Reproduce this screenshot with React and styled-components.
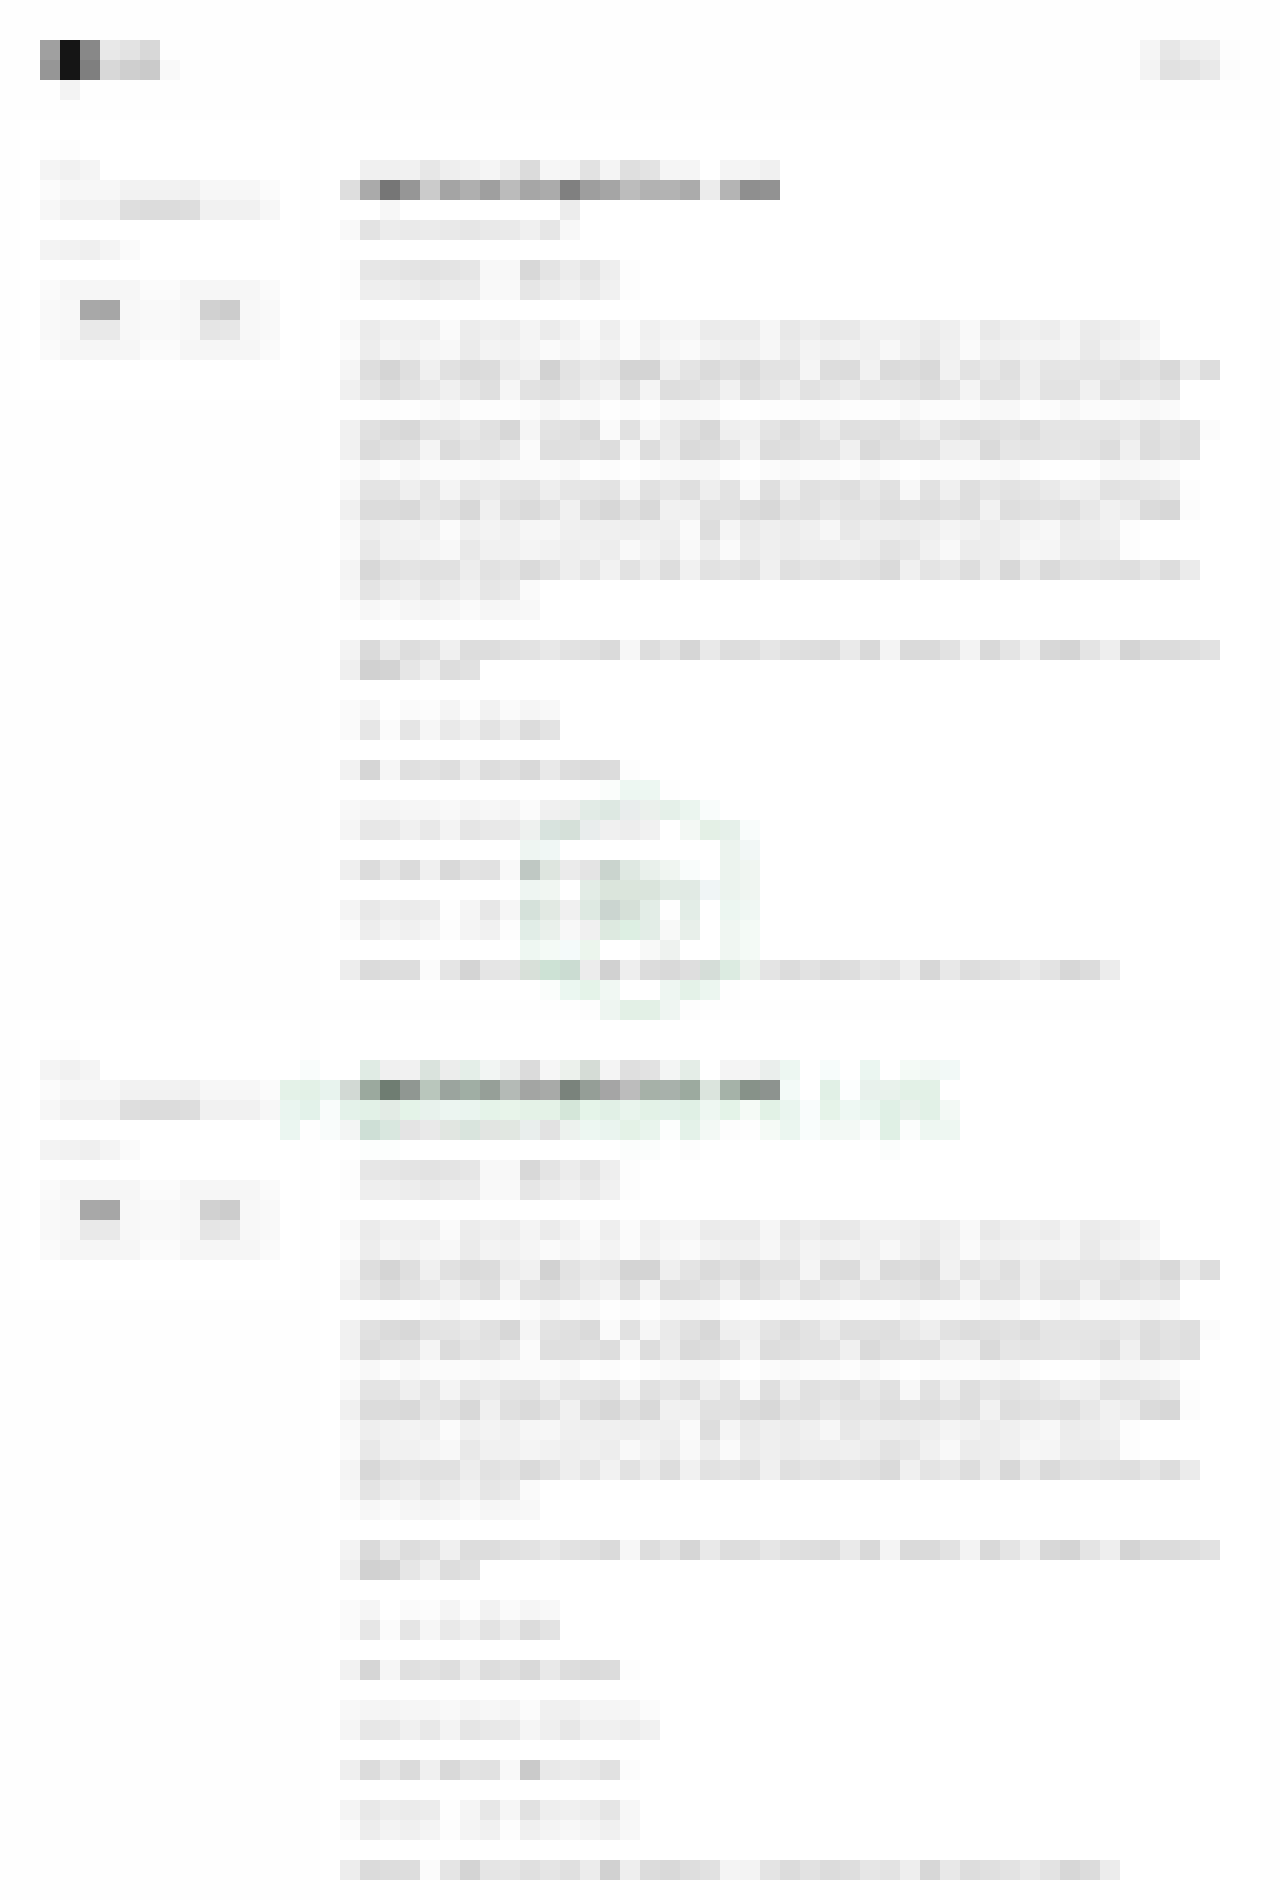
import styled, { createGlobalStyle } from "styled-components";

const GlobalStyle = createGlobalStyle`
  * {
    box-sizing: border-box;
  }
  body {
    margin: 0;
    background: #fefefe;
    font-family: "Liberation Sans", Arial, sans-serif;
  }
`

const Page = styled.div`
  display: flex;
  flex-direction: column;
  gap: 20px;
  padding: 20px 20px 0;
`

const Header = styled.header`
  display: flex;
  justify-content: space-between;
  align-items: flex-start;
  padding: 20px 20px 0;
  min-height: 80px;
`

const HeaderLink = styled.a`
  display: block;
  text-decoration: none;
`

const Section = styled.section`
  display: grid;
  grid-template-columns: 280px minmax(0, 1fr);
  gap: 20px;
  align-items: start;
`

const SideCard = styled.aside`
  display: flex;
  flex-direction: column;
  gap: 20px;
  padding: 20px 20px 40px;
  background: #fff;
`

const MainCard = styled.article`
  display: flex;
  flex-direction: column;
  gap: 20px;
  padding: 40px 20px 20px;
  background: #fff;
  overflow: hidden;
`

const Heading = styled.h2`
  margin: 0;
`

const Text = styled.p`
  margin: 0;
`

const Field = styled.div`
  display: flex;
  flex-direction: column;
`

const PlainButton = styled.button`
  display: block;
  padding: 0;
  border: 0;
  background: none;
  cursor: pointer;
`

const ButtonRow = styled.div`
  display: flex;
`

const Grid = styled.span`
  display: flex;
  flex-direction: column;
`

const GridRow = styled.span`
  display: flex;
  height: 20px;
`

const Cell = styled.span.attrs(({ $tone }) => ({ style: { background: $tone } }))`
  flex: 0 0 20px;
  height: 20px;
`

const Watermark = styled.div`
  position: fixed;
  inset: 0;
  display: flex;
  flex-direction: column;
  align-items: center;
  justify-content: center;
  gap: 40px;
  padding-top: 40px;
  pointer-events: none;
`

// "e4" is a grey, "e4f2e8" a full colour, "ff" an empty cell
const solid = (code) => {
  if (code === "ff") return "transparent"
  return code.length === 2 ? `#${code}${code}${code}` : `#${code}`
}

// turns a pale colour into the see-through ink that gives it on white
const ink = (code) => {
  if (code === "ff") return "transparent"
  const full = code.length === 2 ? code + code + code : code
  const drop = [0, 2, 4].map((i) => 255 - parseInt(full.slice(i, i + 2), 16))
  const alpha = Math.max(...drop, 1) / 177
  const [r, g, b] = drop.map((d) => Math.round(255 - d / alpha))
  return `rgba(${r}, ${g}, ${b}, ${alpha.toFixed(3)})`
}

const Mosaic = ({ rows, paint = solid }) => (
  <Grid>
    {rows.map((row, y) => (
      <GridRow key={y}>
        {row.split(" ").map((code, x) => (
          <Cell key={x} $tone={paint(code)} />
        ))}
      </GridRow>
    ))}
  </Grid>
)

const logo = [
  "a0 15 88 e8 e3 d8 fe",
  "96 15 7f d8 cf ca f9",
  "ff f3 fe",
]

const account = [
  "f5 e7 ee ef fd",
  "f3 e1 e3 e9 fc",
]

const fieldLabel = [
  "fe fd ff",
  "f4 f1 f4",
]

const fieldButton = [
  "fb f7 f7 f7 f2 f2 f2 f0 f7 f7 f7 fb",
  "f7 f1 f1 f1 de dc dc dd f1 f1 f1 f7",
]

const groupLabel = ["f3 f2 ef f4 fa"]

const firstChoice = [
  "fa f6 f6 f6 f6 fb",
  "f9 f8 a8 a6 f8 f9",
  "f9 f8 e9 e9 f8 f9",
  "fa f6 f6 f6 f6 fb",
]

const secondChoice = [
  "fb f6 f6 f6 f6 fa",
  "f9 f8 d1 cc f8 f9",
  "f9 f8 e5 e7 f8 f9",
  "fb f6 f6 f6 f6 fa",
]

const title = [
  "ff f0 f0 f1 e7 ee f1 f5 ed db f6 f5 e2 f4 df e3 f5 f5 ff f4 f4 f0",
  "de aa 76 96 cb a4 af 9f bb a6 ab 80 9e a5 bc b2 b3 ab ec b4 8f 92",
  "ff ff f7 ff ff ff ff ff ff ff ff ec",
]

const subtitle = ["f9 e3 ec ea eb e9 e6 e9 ea f0 e6 f8"]

const paragraphs = [
  [
    "fd e7 e6 e4 e3 e4 e6 f8 f8 d8 e4 ec e4 ee fd",
    "fd ee ef ed ea ed ec f9 f9 e6 ec f0 ea f1 fd",
  ],
  [
    "f8 eb f0 f0 ee fa ec ef ed f4 eb f2 fa ee fb f0 f4 f5 eb ec eb f6 e8 ed e8 e9 f1 f0 ef eb ef f9 e9 ee f0 ed f4 eb ed f0 f5",
    "fb ed f5 f2 f6 f8 eb f3 f2 f5 fa f6 f9 f3 fb f2 f7 fa f3 f0 f1 f7 eb f3 f1 f3 f0 f8 f0 ea f1 fa f0 f2 f4 f4 f6 ea f2 f3 f8",
    "f5 de d5 df f0 e1 db dc ec f1 d2 e3 e9 e7 d4 d4 ef e4 db e1 da e3 e3 f5 dd dc f2 db dd d9 f2 e3 e9 e0 ee e5 e6 e5 e5 df e2 d9 ec dd",
    "f0 e6 de e4 e8 f0 e7 df f6 e2 e0 e5 ee f3 df f4 de e0 e4 f1 e0 e6 ee e2 e7 ec e5 e7 e5 df e4 f4 e3 e4 f0 e3 e3 f1 e1 e5 e9 e4",
    "ff fe fd fe fb f8 fd fd fd fb f6 fb f9 fe fb fe f9 f8 f9 fe ff fd fd fc fb fd fd fd f8 fc fc fc f9 f8 fe fc f7 fb fc fa f8 fa",
    "f1 e1 db d8 e3 e4 e8 e1 d7 f5 e3 e0 da fa e1 f6 ea e1 d8 ef f0 e4 dd e3 ec e0 e1 df e8 ee e2 dd e0 e2 dd e5 e5 e5 e4 e8 de e3 df fb",
    "f1 dc e1 e3 f4 dc e4 e3 e9 fb df e0 e2 dd f8 dd ec da dd e2 f3 dd e0 e3 e3 f0 da e1 e1 e0 ef f0 da e6 e4 e5 e7 e4 dd f0 dd e2 df",
    "fd f8 fd f8 fb fb fb f9 fa fa fb f8 fe fc ff fc f9 f8 f7 fd ff fb f9 fb fa fd f8 fc ff fc fb fc fa f8 fd ff fe fe f8 f7 f9 fa",
    "f8 e4 e4 ef e5 f4 e7 ea e4 e3 ee e6 e5 e3 f6 e1 e7 df ee e3 f9 df ef e1 e3 df e9 e1 f8 e2 f0 df e6 e3 e5 ea f0 ee e2 e4 e6 e8 fd",
    "f0 dc dc d9 e7 e3 d8 f0 e0 da e1 f1 dd d7 e2 d9 f1 f0 e1 e2 dc d8 e3 e1 e8 e4 e4 de e0 de e2 de f2 de e1 e3 df e8 f1 ec db d7 fc",
    "f9 ee f2 f3 f0 fb f0 f3 f0 f6 f7 f0 ef f0 ee f0 ef fa dd f5 ea ef ec f0 f7 e8 ee ee ec ee f4 f2 ed f0 f4 f8 ec ee f1 fd",
    "fa e8 f2 f1 f4 f8 e9 f1 f1 f4 f2 ee f1 ed f9 f2 ec f9 ed fa eb ef ec ee ee f0 ec e3 e7 f1 f9 ec ed f0 f7 f5 ed ec ed fd",
    "f4 d8 e1 e4 e1 e1 ed e2 e5 da e2 ee e4 f2 e2 ed dd f1 e2 e4 e0 f0 e0 e4 e1 e4 e1 da f0 e4 e8 dd ed d8 ea da e2 e4 e1 df e6 dd eb",
    "f6 e4 ec ef e7 ec f1 e6 e9 fa",
    "fd f7 fa f6 f4 f6 fa f6 f7 f8",
  ],
  [
    "f3 da ea dd e1 f0 dd dd e1 e3 e8 e2 e0 da f7 dd e5 d6 e9 dd de e6 e0 de dc ea d9 f4 da da e2 f3 d9 e4 f1 d8 d4 e4 ee d4 dc dc de e2",
    "ef d1 d3 e6 f0 dd e1",
  ],
  [
    "fa f5 ff fa fc f4 fd f2 fa f5 f8",
    "fa e6 fb e5 f6 e9 ef e3 ec dc e3",
  ],
  ["f2 d6 f6 e0 e3 de ed dd e1 d9 e9 dd da dc fd"],
  [
    "f8 f5 f4 f6 f6 f9 f4 f7 f4 fb f0 f0 f5 f5 f6 fb",
    "f5 e7 e8 f0 e8 f3 e5 e8 e9 f5 ef e7 f0 f0 ed f1",
  ],
  ["ef dc e8 db f0 d9 e3 e1 f9 ca e9 eb e8 e1 fc"],
  [
    "f4 e8 ed eb ec fe f5 e7 f6 e1 ee f0 ed e5 f7",
    "fb ed f3 f0 f4 fd f4 f1 fd f0 f4 f8 f4 f0 f8",
  ],
  ["ed db dd dd fb e5 d4 e5 e6 e0 e5 e0 ec d1 ee dc d9 de e1 f4 f3 e4 dc e2 dc de e6 e3 ee d7 e8 dd e0 e3 e9 e3 d7 dc ec"],
]

const badge = [
  "ff ff ff fe fafdfb edf7f2 edf7f2 fe ff ff ff ff",
  "ff ff fdfefd ebf4ef e6f1eb f2f6f6 eff4f0 e5f0e9 ebf5ef f9fcfb ff ff",
  "f8fbf9 e6f1ec ebf6ef f8fcfc ff ff ff ff f3f8f4 e4f0e6 e6f0ea f9fcfb",
  "eef5f2 f0f7f5 ff ff ff ff ff ff ff ff ecf3ee f2f7f6",
  "f0f9f4 f3faf4 ff fb e4eee8 e2ebe5 e9f0eb f0f5f1 f9fcfb ff ecf3ee f0f5f1",
  "eef5f2 f1f6f2 ff e3ece6 dbe5dc dbe5dc dae4dc e2ebe5 e1eae4 f0f5f6 ecf3ee f0f5f1",
  "f1fdf6 f2f9f3 ff effaf3 e1ebe6 dde7df e3ede7 fe e3ede7 ff ecf6f1 f0f7f3",
  "effbf5 f5fbf6 ff fb ebf7ee e3f5e9 e3ede7 f8f9f8 e8efea ff f0f6f2 f4faf6",
  "eef7f2 f4faf6 f4fafa ecf5ed ff ff f8f9f8 eef2ef ff ff f0f6f2 f4faf6",
  "f6fef7 e3f8eb e6f7ed ff ff ff ff ff ff f1f9f4 e6f5eb f8fef9",
  "ff fafdfb ebf7f1 e5f3e9 f1f8f3 ff ff eef6f2 e4f2e8 ecf6f0 fe ff",
  "ff ff ff fe eff6f2 e4f1e7 e4f1e7 f0f6f3 fe ff ff ff",
]

const wordmark = [
  "ff fafdfc ff ff eef9f2 ff ff f0f9f3 fdfefd f1fbf5 fcfffd fdfffe ff ff f6fbf6 f0f7f1 ff ff fe fdfffe edf6f0 ff ff ff f9fdfb edf7f2 ff f7fcfb ff ebf6f1 ff f4faf6 f2f8f4 f2f9f7 ff ff",
  "e4f2e8 e4f2e8 e8f3ee f1f8f3 e3f1e6 e3f1e6 f1f8f3 e6f3e9 edf6f0 e4f2e8 ecf5ee f4faf6 fafcfa fafcfa ecf5ee ecf5ee ff ff eaf5ec edf6f0 e3f1e6 ecf5ee e6f3e9 eaf5ec f4faf6 f3faf8 ff e1f0e6 fcfefe e8f1ec e9f2ec e3f1e7 e3f1e7 ff",
  "eaf5f0 e4f3eb f9fcfb e4f2ea e2f1e7 eaf2ec e4f3e8 e8f2ed ecf5f1 eaf4ef e5f3e9 e8f4ea e4f2e7 e4f2e7 e4f6e9 e5f4e9 e1f0e6 e9f4ed e3f2e7 e3f1e9 e0f0e5 eef7f2 e4f3e8 f5faf6 e2f2e6 eaf5ef f9fcfc e6f3e9 eef8f3 eaf5ef e0f0e6 e9f2ec e2f1e7 f3f9f5",
  "ebf6f1 ff f9fcfb f9fbfa e7f8ef eaf8f0 f9f9f9 fd f6fbf6 f0fbf4 f8fbf8 f5fbf5 f8fdfc fb f4f9f5 edf7f2 eaf4ef e4f2e7 e9f4ed fcfefd e4f2e9 f3f9f5 fd fe f5faf6 ebf6f0 f9fdfc f3f9f5 f3f9f5 fcfdfd e0f0e5 fbfdfc eef7f2 eef7f2",
  "ff ff ff ff fcfefd fcfefd ff ff ff ff ff ff ff ff ff ff ff fbfdfc fbfdfc ff fd ff ff ff ff ff ff ff ff ff fbfdfc",
]

const Post = () => (
  <Section>
    <SideCard>
      <Field>
        <Mosaic rows={fieldLabel} />
        <PlainButton type="button">
          <Mosaic rows={fieldButton} />
        </PlainButton>
      </Field>
      <Mosaic rows={groupLabel} />
      <ButtonRow>
        <PlainButton type="button">
          <Mosaic rows={firstChoice} />
        </PlainButton>
        <PlainButton type="button">
          <Mosaic rows={secondChoice} />
        </PlainButton>
      </ButtonRow>
    </SideCard>
    <MainCard>
      <div>
        <Heading>
          <Mosaic rows={title} />
        </Heading>
        <Text>
          <Mosaic rows={subtitle} />
        </Text>
      </div>
      {paragraphs.map((rows, i) => (
        <Text key={i}>
          <Mosaic rows={rows} />
        </Text>
      ))}
    </MainCard>
  </Section>
)

const App = () => {
  return (
    <>
      <GlobalStyle />
      <Page>
        <Header>
          <HeaderLink href="#home">
            <Mosaic rows={logo} />
          </HeaderLink>
          <HeaderLink href="#account">
            <Mosaic rows={account} />
          </HeaderLink>
        </Header>
        <Post />
        <Post />
      </Page>
      <Watermark aria-hidden="true">
        <Mosaic rows={badge} paint={ink} />
        <Mosaic rows={wordmark} paint={ink} />
      </Watermark>
    </>
  )
}

export default App;
